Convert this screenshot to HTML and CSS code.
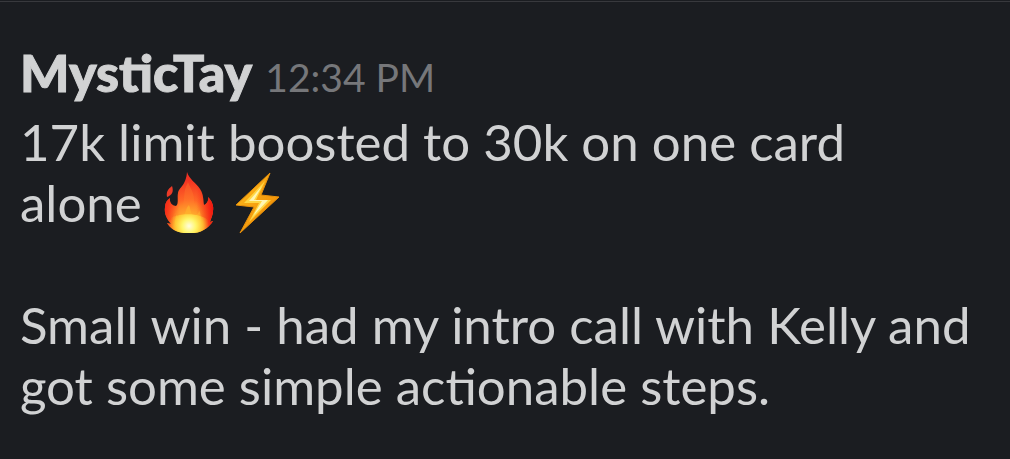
FILE: index.html
```html
<!DOCTYPE html>
<html lang="en">
<head>
<meta charset="utf-8">
<meta name="viewport" content="width=device-width, initial-scale=1">
<title>Message</title>
<link rel="stylesheet" href="styles.css">
</head>
<body>
<article class="message">
  <header class="message-header">
    <strong class="author">MysticTay</strong>
    <time class="time" datetime="12:34">12:34 PM</time>
  </header>
  <div class="message-body">
    <p class="text">17k limit boosted to 30k on one card<br>alone
      <span class="emoji-group">
        <svg class="emoji" viewBox="0 0 62 62" role="img" aria-label="fire">
          <defs>
            <radialGradient id="flame" gradientUnits="userSpaceOnUse" cx="32" cy="55" r="47">
              <stop offset="0" stop-color="#ffef4a"/>
              <stop offset=".3" stop-color="#ffb52b"/>
              <stop offset=".58" stop-color="#ff6826"/>
              <stop offset="1" stop-color="#f23222"/>
            </radialGradient>
            <linearGradient id="flame-side" x1="0" x2="1">
              <stop offset="0" stop-color="#f51c14" stop-opacity=".8"/>
              <stop offset=".3" stop-color="#f51c14" stop-opacity="0"/>
              <stop offset=".65" stop-color="#f51c14" stop-opacity="0"/>
              <stop offset="1" stop-color="#f0140e"/>
            </linearGradient>
            <radialGradient id="flame-core" gradientUnits="userSpaceOnUse" cx="32" cy="54" r="20">
              <stop offset="0" stop-color="#fffce0"/>
              <stop offset=".35" stop-color="#fff66a"/>
              <stop offset=".7" stop-color="#ffd638" stop-opacity=".7"/>
              <stop offset="1" stop-color="#ffb52b" stop-opacity="0"/>
            </radialGradient>
            <path id="flame-shape" d="M30 0C32 7 39 11 43 17C47 23 46 29 47 33C50 32 52 28 51 25C55 29 57 34 56 39C56 43 54 46 53 50L56 49C53 54 47 60 37 61H27C18 60 13 56 10 51L14 52C10 47 7 42 8 35C8 31 10 28 13 26C12 31 16 34 19 34C22 32 20 25 21 21C22 15 29 14 30 0Z"/>
          </defs>
          <path d="M15 14C17 20 15 23 10 25C9 20 11 17 15 14Z" fill="#ed3a27"/>
          <use href="#flame-shape" fill="url(#flame)"/>
          <use href="#flame-shape" fill="url(#flame-side)"/>
          <path d="M31 10C34 18 37 20 37 28C37 35 43 37 45 43C48 51 43 58 34 60C23 61 15 55 16 45C17 40 22 39 25 34C29 27 25 21 31 10Z" fill="#ff8630" opacity=".3"/>
          <path d="M32 33C34 38 33 42 37 43C40 43 42 41 42 38C46 47 44 57 35 60H27C18 58 16 50 20 42C20 46 23 48 25 46C29 43 28 37 32 33Z" fill="#ffb82d" opacity=".55"/>
          <path d="M10 49C18 40 45 40 53 50L56 49C53 54 47 60 37 61H27C18 60 13 56 10 51Z" fill="url(#flame-core)"/>
        </svg>
        <svg class="emoji" viewBox="0 0 62 62" role="img" aria-label="high voltage">
          <defs>
            <linearGradient id="bolt" x1="0" y1="0" x2="1" y2="1">
              <stop offset="0" stop-color="#ffc020"/>
              <stop offset="1" stop-color="#ee8200"/>
            </linearGradient>
          </defs>
          <path d="M43 1L9 33L27 35L13 61L52 25L34 23Z" fill="url(#bolt)" stroke="#e8900a" stroke-linejoin="round"/>
          <path d="M38 9L17 31H32L22 50L44 28H29Z" fill="#ffd744"/>
          <path d="M35 14L22 29H35L26 44L41 28H27Z" fill="#fff6b4"/>
        </svg>
      </span>
    </p>
    <p class="text">Small win - had my intro call with Kelly and<br>got some simple actionable steps.</p>
  </div>
</article>
</body>
</html>
```

FILE: styles.css
```css
body {
  margin: 0;
  padding-top: 1px;
  background: #1b1d21;
  color: #d1d2d3;
  font-family: Lato, sans-serif;
}

.message {
  padding: 39px 20px 32px;
  border-top: 1px solid #38393d;
}

.message-header {
  display: flex;
  align-items: baseline;
  gap: 13px;
  padding-bottom: 3px;
  line-height: 62px;
}

.author {
  font-size: 52px;
  font-weight: 900;
  -webkit-text-stroke: 1px currentColor;
}

.time {
  font-size: 39px;
  color: #76777a;
}

.message-body {
  display: flex;
  flex-direction: column;
  gap: 61px;
}

.text {
  margin: 0;
  font-size: 51px;
  line-height: 61px;
}

.emoji-group {
  display: inline-flex;
  gap: 8px;
  height: 61px;
  margin-left: 2px;
  vertical-align: bottom;
}

.emoji {
  width: 62px;
  height: 62px;
}
```
